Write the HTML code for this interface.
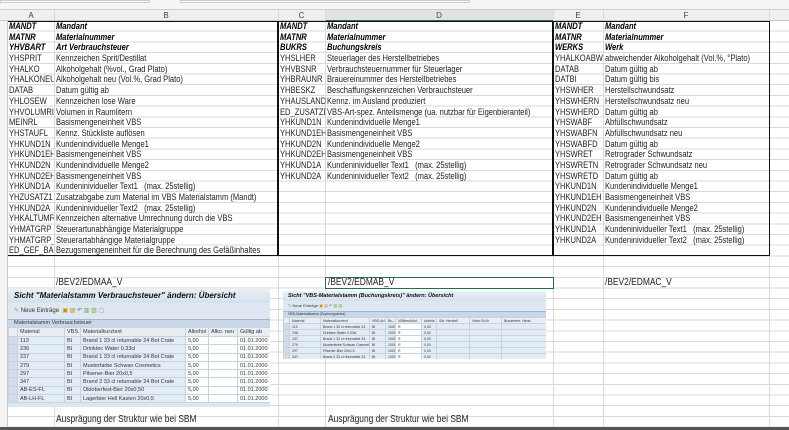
<!DOCTYPE html>
<html><head><meta charset="utf-8"><style>
*{margin:0;padding:0;box-sizing:border-box}
body{width:789px;height:430px;overflow:hidden;background:#fff;font-family:"Liberation Sans",sans-serif;position:relative}
.a{position:absolute}
.grid{position:absolute;left:8px;top:21px;width:781px;height:406px;background:repeating-linear-gradient(to bottom,transparent 0,transparent 9.7px,#dadada 9.7px,#dadada 10.7px)}
.v{position:absolute;top:10px;height:417px;width:1px;background:#dadada}
.col{position:absolute;top:21px;font-size:9px;color:#222;transform:scaleX(0.84);transform-origin:0 0}
.col div{height:10.7px;line-height:10.7px;white-space:nowrap;overflow:hidden}
.col .h{font-weight:bold;font-style:italic;color:#000}
.hdr{position:absolute;top:10px;height:11px;background:#efefef;border-bottom:1px solid #c8c8c8;font-size:8px;color:#444;text-align:center;line-height:11px}
.sap{position:absolute;background:#fff;font-size:6px;color:#333;overflow:hidden}
.sap .t{background:linear-gradient(#e9f0f7,#d3e1ee);font-weight:bold;font-style:italic;color:#111;white-space:nowrap}
.sap .tb{background:#dfe8f1;color:#333;white-space:nowrap}
.sap .sec{background:#c9d8e8;border-top:1px solid #9fb6cf;white-space:nowrap;color:#333}
.sap table{border-collapse:collapse;width:100%;table-layout:fixed}
.sap td{border:1px solid #c6d3e0;white-space:nowrap;overflow:hidden;padding:0 2px;background:#e3ecf5}
.sap tr.th td{background:#eaeef2;color:#333}
.sap td.s{background:#d3dce6}
.sap td.w{background:#fff}
.txt{position:absolute;font-size:10px;color:#222;white-space:nowrap;transform:scaleX(0.84);transform-origin:0 0}
</style></head><body>
<div class="a" style="left:0;top:0;width:789px;height:10px;background:#f5f5f5;border-bottom:1px solid #ccc"></div>
<div class="a" style="left:0;top:0;width:150px;height:3px;background:#fff;border:1px solid #ccc"></div>
<div class="a" style="left:180px;top:0;width:290px;height:3px;background:#fff;border:1px solid #ccc"></div>
<div class="hdr" style="left:0;width:8px"></div>
<div class="hdr" style="left:8px;width:46px">A</div>
<div class="hdr" style="left:54px;width:224px">B</div>
<div class="hdr" style="left:278px;width:47px">C</div>
<div class="hdr" style="left:325px;width:228px;background:#e2e2e2;border-bottom:1px solid #217346">D</div>
<div class="hdr" style="left:553px;width:50px">E</div>
<div class="hdr" style="left:603px;width:166px">F</div>
<div class="hdr" style="left:769px;width:20px"></div>
<div class="a" style="left:0;top:21px;width:8px;height:406px;background:#f3f3f3;border-right:1px solid #ccc"></div>
<div class="grid"></div>
<div class="v" style="left:54px"></div><div class="v" style="left:278px"></div><div class="v" style="left:325px"></div><div class="v" style="left:553px"></div><div class="v" style="left:603px"></div><div class="v" style="left:769px"></div>
<div class="a" style="left:8px;top:21px;width:762px;height:235px;border:1.5px solid #111;border-left:none"></div>
<div class="a" style="left:277px;top:21px;width:2px;height:235px;background:#111"></div>
<div class="a" style="left:552px;top:21px;width:2px;height:235px;background:#111"></div>

<div class="col" style="left:9px;width:53px"><div class="h">MANDT</div><div class="h">MATNR</div><div class="h">YHVBART</div><div>YHSPRIT</div><div>YHALKO</div><div>YHALKONEU</div><div>DATAB</div><div>YHLOSEW</div><div>YHVOLUMRL</div><div>MEINRL</div><div>YHSTAUFL</div><div>YHKUND1N</div><div>YHKUND1EH</div><div>YHKUND2N</div><div>YHKUND2EH</div><div>YHKUND1A</div><div>YHZUSATZ1</div><div>YHKUND2A</div><div>YHKALTUMR</div><div>YHMATGRP</div><div>YHMATGRP_</div><div>ED_GEF_BAS</div></div>
<div class="col" style="left:56px;width:264px"><div class="h">Mandant</div><div class="h">Materialnummer</div><div class="h">Art Verbrauchsteuer</div><div>Kennzeichen Sprit/Destillat</div><div>Alkoholgehalt (%vol., Grad Plato)</div><div>Alkoholgehalt neu (Vol.%, Grad Plato)</div><div>Datum gültig ab</div><div>Kennzeichen lose Ware</div><div>Volumen in Raumlitern</div><div>Basismengeneinheit VBS</div><div>Kennz. Stückliste auflösen</div><div>Kundenindividuelle Menge1</div><div>Basismengeneinheit VBS</div><div>Kundenindividuelle Menge2</div><div>Basismengeneinheit VBS</div><div>Kundeninividueller Text1&nbsp;&nbsp;&nbsp;(max. 25stellig)</div><div>Zusatzabgabe zum Material im VBS Materialstamm (Mandt)</div><div>Kundeninividueller Text2&nbsp;&nbsp;&nbsp;(max. 25stellig)</div><div>Kennzeichen alternative Umrechnung durch die VBS</div><div>Steuerartunabhängige Materialgruppe</div><div>Steuerartabhängige Materialgruppe</div><div>Bezugsmengeneinheit für die Berechnung des Gefäßinhaltes</div></div>
<div class="col" style="left:280px;width:54px"><div class="h">MANDT</div><div class="h">MATNR</div><div class="h">BUKRS</div><div>YHSLHER</div><div>YHVBSNR</div><div>YHBRAUNR</div><div>YHBESKZ</div><div>YHAUSLAND</div><div>ED_ZUSATZD</div><div>YHKUND1N</div><div>YHKUND1EH</div><div>YHKUND2N</div><div>YHKUND2EH</div><div>YHKUND1A</div><div>YHKUND2A</div></div>
<div class="col" style="left:327px;width:266px"><div class="h">Mandant</div><div class="h">Materialnummer</div><div class="h">Buchungskreis</div><div>Steuerlager des Herstellbetriebes</div><div>Verbrauchsteuernummer für Steuerlager</div><div>Brauereinummer des Herstellbetriebes</div><div>Beschaffungskennzeichen Verbrauchsteuer</div><div>Kennz. im Ausland produziert</div><div>VBS-Art-spez. Anteilsmenge (ua. nutzbar für Eigenbieranteil)</div><div>Kundenindividuelle Menge1</div><div>Basismengeneinheit VBS</div><div>Kundenindividuelle Menge2</div><div>Basismengeneinheit VBS</div><div>Kundeninividueller Text1&nbsp;&nbsp;&nbsp;(max. 25stellig)</div><div>Kundeninividueller Text2&nbsp;&nbsp;&nbsp;(max. 25stellig)</div></div>
<div class="col" style="left:555px;width:57px"><div class="h">MANDT</div><div class="h">MATNR</div><div class="h">WERKS</div><div>YHALKOABW</div><div>DATAB</div><div>DATBI</div><div>YHSWHER</div><div>YHSWHERN</div><div>YHSWHERD</div><div>YHSWABF</div><div>YHSWABFN</div><div>YHSWABFD</div><div>YHSWRET</div><div>YHSWRETN</div><div>YHSWRETD</div><div>YHKUND1N</div><div>YHKUND1EH</div><div>YHKUND2N</div><div>YHKUND2EH</div><div>YHKUND1A</div><div>YHKUND2A</div></div>
<div class="col" style="left:605px;width:194px"><div class="h">Mandant</div><div class="h">Materialnummer</div><div class="h">Werk</div><div>abweichender Alkoholgehalt (Vol.%, °Plato)</div><div>Datum gültig ab</div><div>Datum gültig bis</div><div>Herstellschwundsatz</div><div>Herstellschwundsatz neu</div><div>Datum gültig ab</div><div>Abfüllschwundsatz</div><div>Abfüllschwundsatz neu</div><div>Datum gültig ab</div><div>Retrograder Schwundsatz</div><div>Retrograder Schwundsatz neu</div><div>Datum gültig ab</div><div>Kundenindividuelle Menge1</div><div>Basismengeneinheit VBS</div><div>Kundenindividuelle Menge2</div><div>Basismengeneinheit VBS</div><div>Kundeninividueller Text1&nbsp;&nbsp;&nbsp;(max. 25stellig)</div><div>Kundeninividueller Text2&nbsp;&nbsp;&nbsp;(max. 25stellig)</div></div>

<div class="a" style="left:325px;top:277px;width:229px;height:12px;border:1.5px solid #217346;background:#fff"></div>
<div class="txt" style="left:56px;top:277px;line-height:12px">/BEV2/EDMAA_V</div>
<div class="txt" style="left:328px;top:277px;line-height:12px">/BEV2/EDMAB_V</div>
<div class="txt" style="left:605px;top:277px;line-height:12px">/BEV2/EDMAC_V</div>
<div class="txt" style="left:56px;top:414px;line-height:12px">Ausprägung der Struktur wie bei SBM</div>
<div class="txt" style="left:328px;top:414px;line-height:12px">Ausprägung der Struktur wie bei SBM</div>

<div class="sap" style="left:8px;top:289px;width:262px;height:118px;background:#dde7f1">
<div class="t" style="height:14px;line-height:14px;padding-left:6px;font-size:8px">Sicht "Materialstamm Verbrauchsteuer" ändern: Übersicht</div>
<div class="tb" style="height:16px;line-height:16px;padding-left:6px"><span style="color:#6a8">✎</span> Neue Einträge &nbsp;<span style="color:#c80">▣ ▤</span> <span style="color:#27a">↶</span> <span style="color:#6a4">▥ ▥</span> <span style="color:#999">▢</span></div>
<div class="sec" style="height:8px;line-height:7px;padding-left:6px;font-size:5.5px">Materialstamm Verbrauchsteuer</div>
<table style="font-size:5.5px"><colgroup><col style="width:9px"><col style="width:47px"><col style="width:16px"><col style="width:105px"><col style="width:23px"><col style="width:29px"><col style="width:33px"></colgroup>
<tr class="th" style="height:9px"><td class="s"></td><td>Material</td><td>VBS...</td><td>Materialkurztext</td><td>Alkohol</td><td>Alko. neu</td><td>Gültig ab</td></tr>
<tr style="height:8.3px"><td class="s"></td><td>113</td><td>BI</td><td>Brand 1 33 cl returnable 24 Bot Crate</td><td class="w">5,00</td><td class="w"></td><td class="w">01.01.2000</td></tr>
<tr style="height:8.3px"><td class="s"></td><td>236</td><td>BI</td><td>Drinktec Water 0.33cl</td><td class="w">5,00</td><td class="w"></td><td class="w">01.01.2000</td></tr>
<tr style="height:8.3px"><td class="s"></td><td>237</td><td>BI</td><td>Brand 1 33 cl returnable 24 Bot Crate</td><td class="w">5,00</td><td class="w"></td><td class="w">01.01.2000</td></tr>
<tr style="height:8.3px"><td class="s"></td><td>279</td><td>BI</td><td>Musterfarbe Schwan Cosmetics</td><td class="w">5,00</td><td class="w"></td><td class="w">01.01.2000</td></tr>
<tr style="height:8.3px"><td class="s"></td><td>297</td><td>BI</td><td>Pilsener-Bier 20x0,5</td><td class="w">5,00</td><td class="w"></td><td class="w">01.01.2000</td></tr>
<tr style="height:8.3px"><td class="s"></td><td>347</td><td>BI</td><td>Brand 2 33 cl returnable 24 Bot Crate</td><td class="w">5,00</td><td class="w"></td><td class="w">01.01.2000</td></tr>
<tr style="height:8.3px"><td class="s"></td><td>AB-ES-FL</td><td>BI</td><td>Oktoberfest-Bier 20x0,50</td><td class="w">5,00</td><td class="w"></td><td class="w">01.01.2000</td></tr>
<tr style="height:8.3px"><td class="s"></td><td>AB-LH-FL</td><td>BI</td><td>Lagerbier Hell Kasten 20x0,5</td><td class="w">5,00</td><td class="w"></td><td class="w">01.01.2000</td></tr>
</table></div>

<div class="sap" style="left:283px;top:291px;width:263px;height:68px;background:#dde7f1;font-size:4px">
<div class="t" style="height:10px;line-height:10px;padding-left:5px;font-size:5.5px">Sicht "VBS-Materialstamm (Buchungskreis)" ändern: Übersicht</div>
<div class="tb" style="height:10px;line-height:10px;padding-left:5px;font-size:4px"><span style="color:#6a8">✎</span> Neue Einträge <span style="color:#c80">▣ ▤</span> <span style="color:#27a">↶</span> <span style="color:#6a4">▥ ▥</span></div>
<div class="sec" style="height:6px;line-height:5px;padding-left:5px;font-size:3.5px">VBS-Materialstamm (Buchungskreis)</div>
<table style="font-size:3.5px"><colgroup><col style="width:6px"><col style="width:31px"><col style="width:49px"><col style="width:16px"><col style="width:10px"><col style="width:26px"><col style="width:15px"><col style="width:33px"><col style="width:32px"><col style="width:45px"></colgroup>
<tr class="th" style="height:6px"><td class="s"></td><td>Material</td><td>Materialkurztext</td><td>VBS-Art</td><td>Bu..</td><td>VBBeschArt</td><td>Anteils..</td><td>Stlr. Herstell</td><td>Verbr.St.Nr</td><td>Brauereinr. Herst.</td></tr>
<tr style="height:6px"><td class="s"></td><td>113</td><td>Brand 1 33 cl returnable 24</td><td>BI</td><td>1000</td><td class="w">R</td><td>0,00</td><td></td><td></td><td></td></tr>
<tr style="height:6px"><td class="s"></td><td>236</td><td>Drinktec Water 0.33cl</td><td>BI</td><td>1000</td><td class="w">R</td><td>0,00</td><td></td><td></td><td></td></tr>
<tr style="height:6px"><td class="s"></td><td>237</td><td>Brand 1 33 cl returnable 24</td><td>BI</td><td>1000</td><td class="w">R</td><td>0,00</td><td></td><td></td><td></td></tr>
<tr style="height:6px"><td class="s"></td><td>279</td><td>Musterfarbe Schwan Cosmeti</td><td>BI</td><td>1000</td><td class="w">R</td><td>0,00</td><td></td><td></td><td></td></tr>
<tr style="height:6px"><td class="s"></td><td>297</td><td>Pilsener-Bier 20x0,5</td><td>BI</td><td>1000</td><td class="w">R</td><td>0,00</td><td></td><td></td><td></td></tr>
<tr style="height:6px"><td class="s"></td><td>347</td><td>Brand 2 33 cl returnable 24</td><td>BI</td><td>1000</td><td class="w">R</td><td>0,00</td><td></td><td></td><td></td></tr>
</table></div>

<div class="a" style="left:0;top:427px;width:789px;height:3px;background:#555"></div>
</body></html>
